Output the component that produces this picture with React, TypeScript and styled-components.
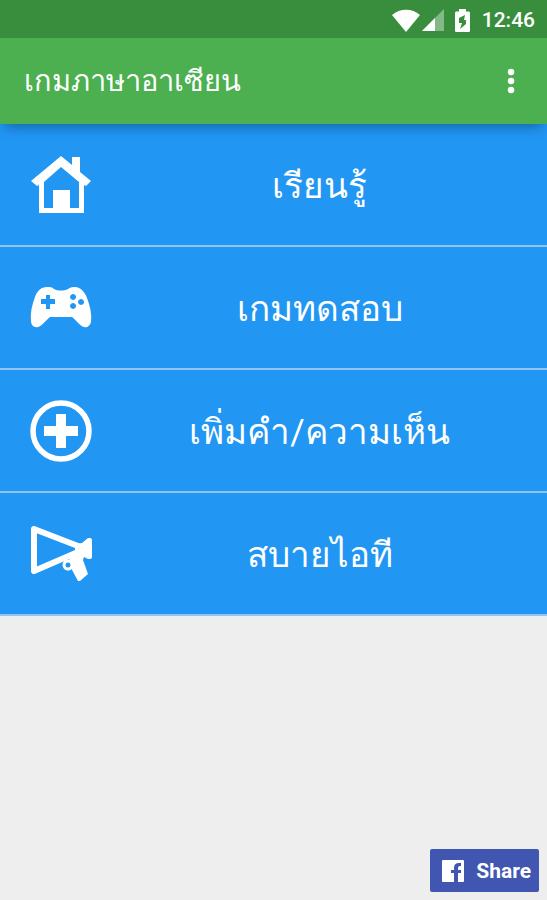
import React from "react";
import styled, { createGlobalStyle } from "styled-components";

const GlobalStyle = createGlobalStyle`
  * { box-sizing: border-box; }
  html, body { margin: 0; }
  body { background: #eeeeee; }
  body, button { font-family: Roboto, sans-serif; }
`;

const Screen = styled.div`
  display: flex;
  flex-direction: column;
  min-height: 100vh;
`;

const StatusBar = styled.div`
  display: flex;
  justify-content: flex-end;
  align-items: center;
  height: 38px;
  padding: 2px 12px 0 0;
  background: #388e3c;
  color: #ffffff;
`;

const StatusIcon = styled.svg<{ $gap: number }>`
  display: block;
  flex: none;
  margin-right: ${(p) => p.$gap}px;
`;

const Clock = styled.time`
  font-size: 21px;
  font-weight: 500;
  line-height: 24px;
`;

const AppBar = styled.header`
  display: flex;
  justify-content: space-between;
  align-items: center;
  height: 86px;
  padding: 0 20px 0 24px;
  position: relative;
  background: #4caf50;
  box-shadow: 0 8px 12px -5px rgba(0, 0, 0, 0.32);
  color: #ffffff;
`;

const Title = styled.h1`
  margin: 0;
  font-size: 29px;
  font-weight: 400;
  line-height: 40px;
`;

const IconButton = styled.button`
  display: flex;
  justify-content: center;
  padding: 8px 0;
  width: 32px;
  border: 0;
  background: none;
  color: inherit;
  cursor: pointer;
`;

const Menu = styled.nav`
  background: #2196f3;
`;

const MenuItem = styled.button`
  display: flex;
  align-items: center;
  width: 100%;
  height: 123px;
  padding: 0 0 0 30px;
  border: 0;
  border-bottom: 2px solid #90c4f2;
  background: none;
  color: #ffffff;
  cursor: pointer;
`;

const MenuIcon = styled.svg`
  display: block;
  flex: none;
  width: 62px;
  height: 62px;
`;

const MenuLabel = styled.span`
  flex: 1;
  padding-top: 4px;
  text-align: center;
  font-size: 35px;
  line-height: 48px;
`;

const Footer = styled.footer`
  display: flex;
  justify-content: flex-end;
  margin-top: auto;
  padding: 8px;
`;

const ShareButton = styled.button`
  display: flex;
  align-items: center;
  gap: 12px;
  height: 43px;
  padding: 0 8px 0 12px;
  border: 0;
  border-radius: 2px;
  background: #4056b0;
  color: #ffffff;
  font-size: 21px;
  font-weight: 700;
  line-height: 24px;
  cursor: pointer;
`;

const HomeIcon = () => (
  <MenuIcon viewBox="0 0 62 62" fill="currentColor" aria-hidden="true">
    <path d="M31 2 L42 11 V3 H50 V18 L61 27 L56 32 L54 31 V59 H9 V31 L7 32 L1 27 Z M31 13 L14 28 V54 H23 V36 H40 V54 H49 V28 Z" fillRule="evenodd" />
  </MenuIcon>
);

const GameIcon = () => (
  <MenuIcon viewBox="0 0 62 62" fill="currentColor" aria-hidden="true">
    <path
      fillRule="evenodd"
      d="M17 10 C20 10 22 10 24 12 C28 14 34 14 38 12 C41 10 43 10 46 10 C51 11 55 15 57 21 C60 29 62 37 61 45 C60 49 57 51 54 50 C50 49 46 43 42 40 H20 C16 43 12 49 8 50 C4 51 1 48 1 44 C0 36 2 28 5 20 C7 14 11 10 17 10 Z
      M16 18 V22 H11 V27 H16 V32 H20 V27 H25 V22 H20 V18 Z
      M43 17 a3 3 0 1 0 .1 0 Z M51 22 a3 3 0 1 0 .1 0 Z M43 26 a3 3 0 1 0 .1 0 Z"
    />
  </MenuIcon>
);

const AddIcon = () => (
  <MenuIcon viewBox="0 0 62 62" aria-hidden="true">
    <circle cx="31" cy="31" r="28" fill="none" stroke="currentColor" strokeWidth="5.5" />
    <path d="M26 14 H36 V26 H48 V36 H36 V48 H26 V36 H14 V26 H26 Z" fill="currentColor" />
  </MenuIcon>
);

const MegaphoneIcon = () => (
  <MenuIcon viewBox="0 0 62 62" aria-hidden="true">
    <path d="M4 6 L48 23 V29 L4 48 Z" fill="none" stroke="currentColor" strokeWidth="6" strokeLinejoin="round" />
    <path d="M46 21 L52 20 L58 15 H60 Q62 15 62 17 V34 Q62 36 60 36 H58 L54 34 L53 37 L58 51 L50 58 H48 L41 45 L39 37 L45 28 Z" fill="currentColor" />
    <circle cx="38" cy="42" r="4" fill="#2196f3" stroke="currentColor" strokeWidth="3" />
  </MenuIcon>
);

const items = [
  { label: "เรียนรู้", Icon: HomeIcon },
  { label: "เกมทดสอบ", Icon: GameIcon },
  { label: "เพิ่มคำ/ความเห็น", Icon: AddIcon },
  { label: "สบายไอที", Icon: MegaphoneIcon },
];

export default function App() {
  return (
    <Screen lang="th">
      <GlobalStyle />
      <StatusBar>
        <StatusIcon $gap={2} width="28" height="23" viewBox="0 0 28 23" aria-hidden="true">
          <path d="M0 6 C8 -1 20 -1 28 6 L14 23 Z" fill="#ffffff" />
        </StatusIcon>
        <StatusIcon $gap={11} width="22" height="22" viewBox="0 0 22 22" aria-hidden="true">
          <path d="M22 0 V22 H0 Z" fill="#84b987" />
          <path d="M13 9 V22 H0 Z" fill="#ffffff" />
        </StatusIcon>
        <StatusIcon $gap={12} width="15" height="23" viewBox="0 0 15 23" aria-hidden="true">
          <path
            fillRule="evenodd"
            fill="#ffffff"
            d="M4 0 H11 V2.500 H14 Q15 2.500 15 4 V21.500 Q15 23 14 23 H1 Q0 23 0 21.500 V4 Q0 2.500 1 2.500 H4 Z M10 6 L4 9 V14 H7 L5 20 L11 15 V11 H9 Z"
          />
        </StatusIcon>
        <Clock>12:46</Clock>
      </StatusBar>
      <AppBar>
        <Title>เกมภาษาอาเซียน</Title>
        <IconButton type="button" aria-label="ตัวเลือกเพิ่มเติม">
          <svg width="8" height="26" viewBox="0 0 8 26" fill="currentColor" aria-hidden="true">
            <circle cx="4" cy="4" r="3.300" />
            <circle cx="4" cy="13" r="3.300" />
            <circle cx="4" cy="22" r="3.300" />
          </svg>
        </IconButton>
      </AppBar>
      <Menu>
        {items.map(({ label, Icon }) => (
          <MenuItem key={label} type="button">
            <Icon />
            <MenuLabel>{label}</MenuLabel>
          </MenuItem>
        ))}
      </Menu>
      <Footer>
        <ShareButton type="button">
          <svg width="22" height="22" viewBox="0 0 22 22" aria-hidden="true">
            <path
              fillRule="evenodd"
              fill="#ffffff"
              d="M1 0 H21 Q22 0 22 1 V21 Q22 22 21 22 H16 V13 H19 V10 H16 V8 Q16 6 18 6 H19 V3 H17 Q12 3 12 8 V10 H9 V13 H12 V22 H1 Q0 22 0 21 V1 Q0 0 1 0 Z"
            />
          </svg>
          Share
        </ShareButton>
      </Footer>
    </Screen>
  );
}
